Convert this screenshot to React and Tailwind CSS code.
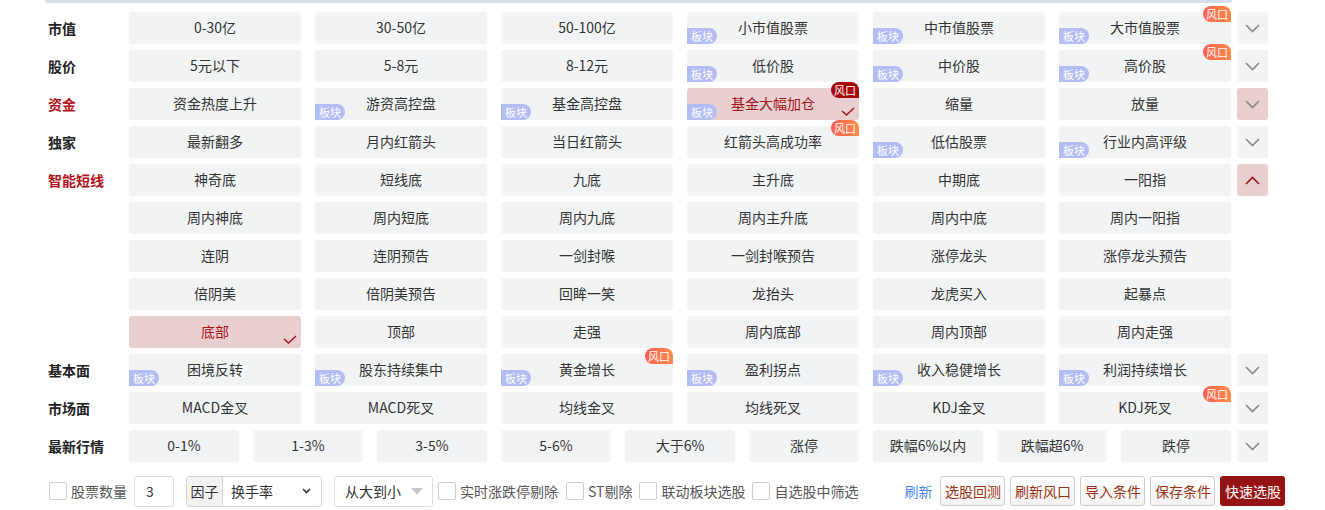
import React, { useState } from 'react';

const FONT = { fontFamily: '"Noto Sans CJK SC", "Noto Sans", sans-serif' };

// [text, bankuai, fengkou, selected]
const sections = [
  {
    label: '市值',
    arrow: 'down',
    lines: [[['0-30亿'], ['30-50亿'], ['50-100亿'], ['小市值股票', 1], ['中市值股票', 1], ['大市值股票', 1, 1]]],
  },
  {
    label: '股价',
    arrow: 'down',
    lines: [[['5元以下'], ['5-8元'], ['8-12元'], ['低价股', 1], ['中价股', 1], ['高价股', 1, 1]]],
  },
  {
    label: '资金',
    red: true,
    arrow: 'down-active',
    lines: [[['资金热度上升'], ['游资高控盘', 1], ['基金高控盘', 1], ['基金大幅加仓', 1, 1, 1], ['缩量'], ['放量']]],
  },
  {
    label: '独家',
    arrow: 'down',
    lines: [[['最新翻多'], ['月内红箭头'], ['当日红箭头'], ['红箭头高成功率', 0, 1], ['低估股票', 1], ['行业内高评级', 1]]],
  },
  {
    label: '智能短线',
    red: true,
    arrow: 'up',
    lines: [
      [['神奇底'], ['短线底'], ['九底'], ['主升底'], ['中期底'], ['一阳指']],
      [['周内神底'], ['周内短底'], ['周内九底'], ['周内主升底'], ['周内中底'], ['周内一阳指']],
      [['连阴'], ['连阴预告'], ['一剑封喉'], ['一剑封喉预告'], ['涨停龙头'], ['涨停龙头预告']],
      [['倍阴美'], ['倍阴美预告'], ['回眸一笑'], ['龙抬头'], ['龙虎买入'], ['起暴点']],
      [['底部', 0, 0, 1], ['顶部'], ['走强'], ['周内底部'], ['周内顶部'], ['周内走强']],
    ],
  },
  {
    label: '基本面',
    arrow: 'down',
    lines: [[['困境反转', 1], ['股东持续集中', 1], ['黄金增长', 1, 1], ['盈利拐点', 1], ['收入稳健增长', 1], ['利润持续增长', 1]]],
  },
  {
    label: '市场面',
    arrow: 'down',
    lines: [[['MACD金叉'], ['MACD死叉'], ['均线金叉'], ['均线死叉'], ['KDJ金叉'], ['KDJ死叉', 0, 1]]],
  },
  {
    label: '最新行情',
    arrow: 'down',
    narrow: true,
    lines: [[['0-1%'], ['1-3%'], ['3-5%'], ['5-6%'], ['大于6%'], ['涨停'], ['跌幅6%以内'], ['跌幅超6%'], ['跌停']]],
  },
];

const Chevron = ({ up, color }) => (
  <svg width="15" height="9" viewBox="0 0 15 9" fill="none">
    <path
      d={up ? 'M1 8 L7.5 1.5 L14 8' : 'M1 1 L7.5 7.5 L14 1'}
      stroke={color}
      strokeWidth="1.6"
    />
  </svg>
);

const Cell = ({ item, narrow }) => {
  const [text, bk, fk, sel] = item;
  return (
    <div
      className={`relative h-[32px] rounded-[3px] flex items-center justify-center pb-[1px] text-[14px] ${
        narrow ? 'w-[110px]' : 'w-[172px]'
      } ${sel ? 'bg-[#eacfd1] text-[#a3151c]' : 'bg-[#f2f3f5] text-[#333333]'}`}
    >
      {text}
      {bk ? (
        <span className="absolute left-0 bottom-0 h-[16px] w-[30px] rounded-tl-[8px] rounded-r-full bg-[#b3bdf3] text-white text-[11px] leading-[16px] text-center">
          板块
        </span>
      ) : null}
      {fk ? (
        <span
          className={`absolute right-0 top-[-6px] h-[16px] w-[28px] rounded-t-[8px] rounded-bl-[8px] text-white text-[11px] leading-[16px] text-center ${
            sel ? 'bg-[#a8070c]' : 'bg-gradient-to-r from-[#ff5f4f] to-[#ff8a4a]'
          }`}
        >
          风口
        </span>
      ) : null}
      {sel ? (
        <svg className="absolute right-[4px] bottom-[4px]" width="14" height="9" viewBox="0 0 14 9" fill="none">
          <path d="M1 4 L5.5 8 L13 1" stroke="#a3151c" strokeWidth="1.5" />
        </svg>
      ) : null}
    </div>
  );
};

const Check = () => (
  <span className="inline-block w-[18px] h-[18px] border border-[#cfcfcf] rounded-[2px] bg-white shrink-0"></span>
);

const App = () => {
  const [count] = useState('3');

  return (
    <div className="w-[1325px] h-[510px] bg-white overflow-hidden" style={FONT}>
      <div className="ml-[45px] w-[1187px] h-[3px] bg-[#d5deea] rounded-b-[3px]"></div>

      <div className="pl-[48px] pt-[9px] flex flex-col gap-[6px]">
        {sections.map((sec) =>
          sec.lines.map((line, li) => (
            <div key={sec.label + li} className="flex items-center">
              <div
                className={`w-[81px] shrink-0 text-[14px] font-bold ${
                  sec.red ? 'text-[#b0121b]' : 'text-[#222222]'
                }`}
              >
                {li === 0 ? sec.label : ''}
              </div>
              <div className="flex gap-[14px]">
                {line.map((item) => (
                  <Cell key={item[0]} item={item} narrow={sec.narrow} />
                ))}
              </div>
              {li === 0 ? (
                <div
                  className={`ml-[6px] w-[31px] h-[32px] rounded-[3px] flex items-center justify-center ${
                    sec.arrow === 'down' ? 'bg-[#f2f3f5]' : 'bg-[#eacfd1]'
                  }`}
                >
                  <Chevron
                    up={sec.arrow === 'up'}
                    color={sec.arrow === 'up' ? '#a3151c' : '#8a8a8a'}
                  />
                </div>
              ) : null}
            </div>
          ))
        )}
      </div>

      {/* bottom toolbar */}
      <div className="mt-[13px] pl-[49px] flex items-center h-[32px] text-[14px] text-[#555555]">
        <Check />
        <span className="ml-[4px]">股票数量</span>
        <div className="ml-[7px] w-[40px] h-[31px] border border-[#dcdcdc] rounded-[3px] flex items-center pl-[11px] text-[#333333]">
          {count}
        </div>
        <div className="ml-[12px] w-[136px] h-[31px] border border-[#d4d4d4] rounded-[3px] flex items-center text-[#333333]">
          <span className="h-full w-[36px] bg-[#f3f3f3] border-r border-[#d4d4d4] flex items-center justify-center">因子</span>
          <span className="ml-[8px]">换手率</span>
          <svg className="ml-auto mr-[10px]" width="9" height="6" viewBox="0 0 9 6" fill="none">
            <path d="M1 1 L4.5 4.5 L8 1" stroke="#333333" strokeWidth="1.6" />
          </svg>
        </div>
        <div className="ml-[12px] w-[99px] h-[31px] border border-[#dcdcdc] rounded-[3px] flex items-center pl-[10px] text-[#333333]">
          从大到小
          <svg className="ml-auto mr-[9px]" width="12" height="7" viewBox="0 0 12 7">
            <path d="M0 0 L12 0 L6 7 Z" fill="#c8c8c8" />
          </svg>
        </div>
        <div className="ml-[5px] flex items-center">
          <Check />
          <span className="ml-[4px]">实时涨跌停剔除</span>
        </div>
        <div className="ml-[8px] flex items-center">
          <Check />
          <span className="ml-[4px]">ST剔除</span>
        </div>
        <div className="ml-[7px] flex items-center">
          <Check />
          <span className="ml-[4px]">联动板块选股</span>
        </div>
        <div className="ml-[7px] flex items-center">
          <Check />
          <span className="ml-[4px]">自选股中筛选</span>
        </div>

        <span className="ml-[46px] text-[#4b86f0]">刷新</span>
        <div className="ml-[8px] flex gap-[5px]">
          {['选股回测', '刷新风口', '导入条件', '保存条件'].map((t) => (
            <button
              key={t}
              className="w-[65px] h-[30px] border border-[#cccccc] rounded-[3px] bg-gradient-to-b from-white to-[#f3f3f3] text-[#9a3214] text-[14px]"
            >
              {t}
            </button>
          ))}
          <button className="w-[65px] h-[30px] rounded-[3px] bg-[#961313] text-white text-[14px]">
            快速选股
          </button>
        </div>
      </div>
    </div>
  );
};

export default App;
